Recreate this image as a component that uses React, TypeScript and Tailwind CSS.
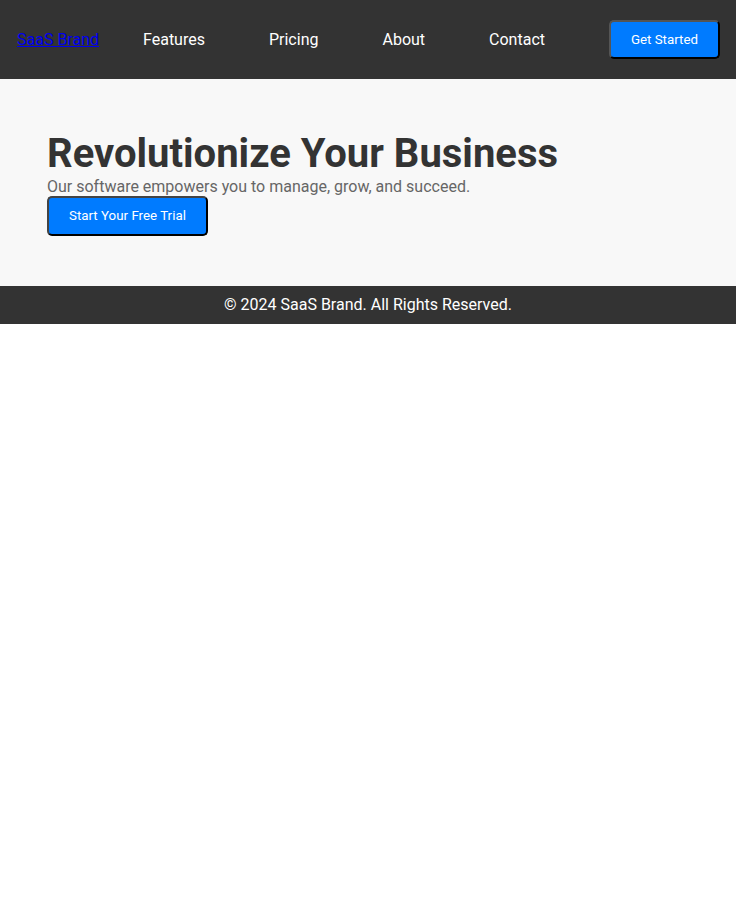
export default function App() {
  const links = ['Features', 'Pricing', 'About', 'Contact'];

  return (
    <div className="min-h-[898px] bg-white font-['Roboto',sans-serif]">
      {/* header */}
      <header className="flex items-center bg-[#333333] pl-[17px] pr-[16px] h-[79px]">
        <a href="#" className="text-[16px] text-[#0000ee] underline">
          SaaS Brand
        </a>
        <nav className="flex ml-[12px]">
          {links.map((l) => (
            <a key={l} href="#" className="mx-[32px] text-[16px] text-white">
              {l}
            </a>
          ))}
        </nav>
        <button className="ml-auto rounded-[5px] border-2 border-solid border-t-[#555] border-l-[#555] border-r-black border-b-black bg-[#007bff] px-[20px] py-[10px] text-[13.333px] leading-[15.5px] text-white">
          Get Started
        </button>
      </header>

      {/* hero */}
      <section className="bg-[#f8f8f8] pl-[47px] pt-[51px] pb-[50px]">
        <h1 className="text-[40px] font-bold leading-[47px] text-[#333333]">
          Revolutionize Your Business
        </h1>
        <p className="text-[16px] leading-[19px] text-[#666666]">
          Our software empowers you to manage, grow, and succeed.
        </p>
        <button className="rounded-[5px] border-2 border-solid border-t-[#444] border-l-[#444] border-r-black border-b-black bg-[#007bff] px-[20px] py-[10px] text-[13.333px] leading-[15.5px] text-white">
          Start Your Free Trial
        </button>
      </section>

      {/* footer */}
      <footer className="bg-[#333333] py-[10px] text-center text-[16px] leading-[18.5px] text-white">
        © 2024 SaaS Brand. All Rights Reserved.
      </footer>
    </div>
  );
}
